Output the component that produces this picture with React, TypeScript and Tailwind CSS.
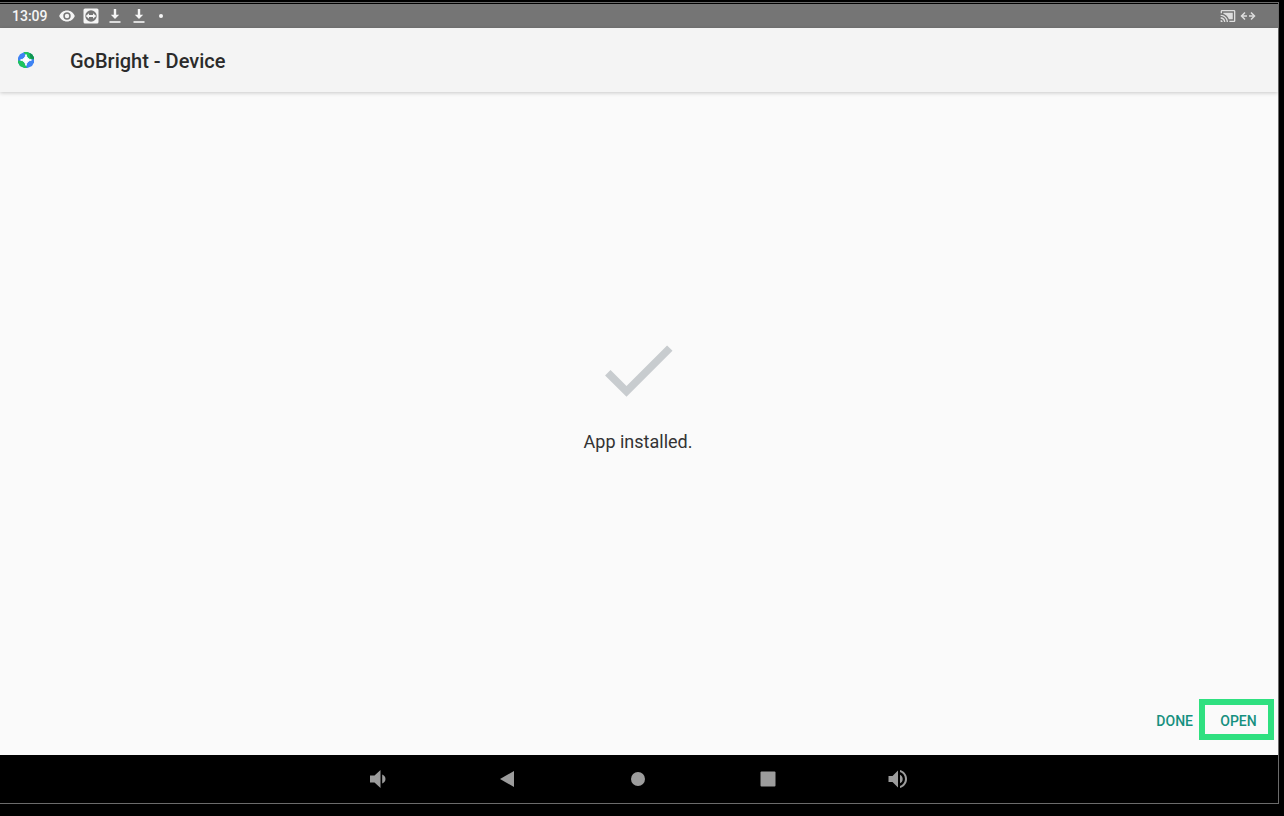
import type { ReactNode } from "react";

function DownloadIcon() {
  return (
    <svg viewBox="0 0 16 16" className="size-4" fill="currentColor" aria-hidden="true">
      <path d="M6.800 1h2.400v5.800h3L8 11 3.800 6.800h3z" />
      <path d="M2.500 13h11v2h-11z" opacity=".8" />
    </svg>
  );
}

function StatusBar() {
  return (
    <div className="flex h-6 shrink-0 items-center justify-between bg-[#757575] pr-[22px] pl-3 text-[#f5f5f5]">
      <div className="flex items-center gap-2">
        <span className="mr-[3px] text-sm leading-6 font-medium">13:09</span>
        <svg viewBox="0 0 16 16" className="size-4" fill="currentColor" aria-hidden="true">
          <path
            fillRule="evenodd"
            d="M8 2.500C4.500 2.500 1.500 4.700.2 8c1.300 3.300 4.300 5.500 7.800 5.500s6.500-2.200 7.800-5.500C14.500 4.700 11.500 2.500 8 2.500zM8 11.700a3.700 3.700 0 1 1 0-7.400 3.700 3.700 0 0 1 0 7.400z"
          />
          <circle cx="8" cy="8" r="2.200" />
        </svg>
        <svg viewBox="0 0 16 16" className="size-4" fill="currentColor" aria-hidden="true">
          <rect x=".5" y=".5" width="15" height="15" rx="1.500" />
          <circle cx="8" cy="8" r="5.700" fill="#757575" />
          <path d="M2.800 8 6 5.200v1.700h4V5.200L13.200 8 10 10.800V9.100H6v1.700z" />
        </svg>
        <DownloadIcon />
        <DownloadIcon />
        <span className="ml-1 size-1 rounded-full bg-[#f5f5f5]" />
      </div>
      <div className="flex items-center gap-1 text-[#dedede]">
        <svg viewBox="0 0 24 24" className="size-4" fill="currentColor" aria-hidden="true">
          <path d="M1 18v3h3c0-1.660-1.340-3-3-3zm0-4v2c2.760 0 5 2.240 5 5h2c0-3.870-3.130-7-7-7zm18-7H5v1.630c3.960 1.280 7.090 4.410 8.370 8.370H19V7zM1 10v2c4.970 0 9 4.030 9 9h2c0-6.080-4.930-11-11-11zm20-7H3c-1.100 0-2 .9-2 2v3h2V5h18v14h-7v2h7c1.100 0 2-.9 2-2V5c0-1.100-.9-2-2-2z" />
          <path d="M6 7.500h12.500v9H14C12.500 12.800 9.800 10 6 8.500z" />
        </svg>
        <svg viewBox="0 0 16 16" className="size-4" fill="none" stroke="currentColor" strokeWidth="1.500" aria-hidden="true">
          <path d="M5 4.500 1.500 8 5 11.500M11 4.500 14.500 8 11 11.500" />
          <path d="M2 8h5M9 8h5" />
        </svg>
      </div>
    </div>
  );
}

function AppLogo() {
  return (
    <svg viewBox="0 0 18 18" className="size-[18px]" aria-hidden="true">
      <path fill="#3f83f3" d="M7.500 1h3L15 3.200 17 6.500v5L15 15l-4.500 2h-3L3 15 1 11.500v-5L3 3.200z" />
      <path fill="#1fc45c" d="M6.500 1.400 7.500 1h3L15 3.200l2 3.300v1.800L12 8 9.500 4.500z" />
      <path fill="#1fc45c" d="M1 9.500 6 10l2.500 4 1.500 3H7.500L3 15 1 11.500z" />
      <path fill="#0e9450" d="M12.500 2 15 3.200l2 3.300v1.800l-3.500-.8z" />
      <path fill="#fff" stroke="#fff" strokeWidth="1" d="M9 3.500c.9 3.500 2 4.600 5.500 5.500C11 9.900 9.900 11 9 14.500 8.100 11 7 9.900 3.500 9 7 8.100 8.100 7 9 3.500z" />
    </svg>
  );
}

function NavButton({ label, children }: { label: string; children: ReactNode }) {
  return (
    <button type="button" aria-label={label} className="flex h-full w-[130px] items-center justify-center text-[#9c9c9c]">
      <svg viewBox="0 0 24 24" className="size-6" fill="currentColor" aria-hidden="true">
        {children}
      </svg>
    </button>
  );
}

export default function App() {
  return (
    <div className="flex min-h-screen flex-col bg-black pt-[2px] pr-[5px] pb-3 font-['Roboto',sans-serif]">
      <div className="flex grow flex-col border-t border-r border-b border-[#6b6b6b] pt-px">
        <StatusBar />
        <header className="z-10 flex h-16 shrink-0 items-center gap-[35px] bg-[#f4f4f4] pl-[17px] shadow-[0_1px_4px_rgba(0,0,0,0.2)]">
          <AppLogo />
          <h1 className="pt-[2px] text-xl font-medium text-[#2b2b2b]">GoBright - Device</h1>
        </header>
        <main className="flex grow flex-col bg-[#fafafa]">
          <div className="flex grow flex-col items-center justify-center gap-[14px] pt-px pr-[2px]">
            <svg viewBox="0 0 24 24" className="size-[92px]" fill="#c8cccf" aria-hidden="true">
              <path d="M9 16.170 4.830 12l-1.420 1.410L9 19 21 7l-1.410-1.410z" />
            </svg>
            <p className="text-lg leading-6 text-[#333]">App installed.</p>
          </div>
          <div className="flex h-[71px] shrink-0 items-start justify-end pt-[15px] pr-1 text-sm font-medium text-[#16907f]">
            <button type="button" className="h-[41px] px-[6px] pt-[2px]">DONE</button>
            <button type="button" className="h-[41px] w-[75px] border-[6px] border-[#2fe080] pt-[2px] pl-1">OPEN</button>
          </div>
        </main>
        <nav className="flex h-12 shrink-0 justify-center bg-black pr-[2px]">
          <NavButton label="Volume down">
            <path d="M4 8.500v7h4.500L14.500 21V3L8.500 8.500z" />
            <path d="M16.200 7.500v9c1.900-.8 3.300-2.400 3.300-4.500s-1.400-3.700-3.300-4.500z" />
          </NavButton>
          <NavButton label="Back">
            <path d="M18 4v16L4 12z" />
          </NavButton>
          <NavButton label="Home">
            <circle cx="12" cy="12" r="7" />
          </NavButton>
          <NavButton label="Recent apps">
            <rect x="4.500" y="4.500" width="15" height="15" rx="1" />
          </NavButton>
          <NavButton label="Volume up">
            <path d="M2.500 9v6h4l5.500 5.500v-17L6.500 9z" />
            <path d="M14 7.700v8.600c1.600-.7 2.700-2.300 2.700-4.300S15.600 8.400 14 7.700z" />
            <path d="M14 3v2.100c2.900.9 5 3.600 5 6.900s-2.100 6-5 6.900V21c4-.9 7-4.500 7-9s-3-8.100-7-9z" />
          </NavButton>
        </nav>
      </div>
    </div>
  );
}
